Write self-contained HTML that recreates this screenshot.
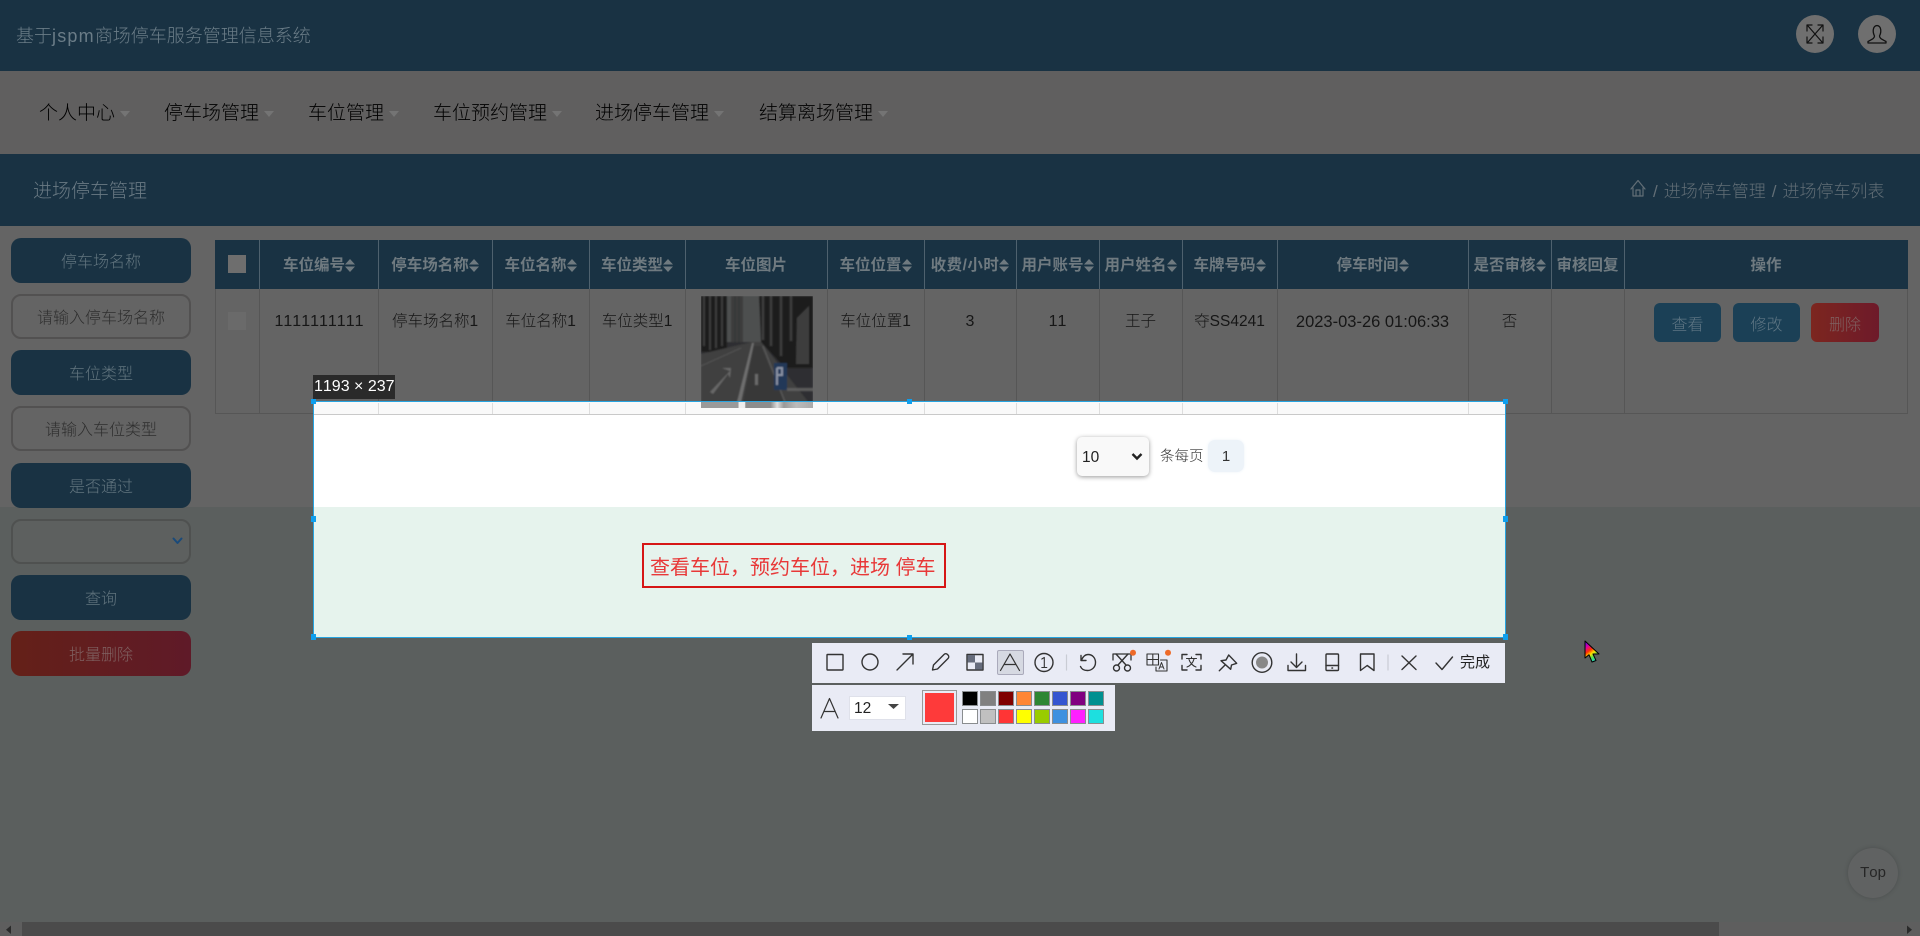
<!DOCTYPE html>
<html lang="zh">
<head>
<meta charset="utf-8">
<title>进场停车管理</title>
<style>
html,body{margin:0;padding:0;width:1920px;height:936px;overflow:hidden;background:#646464}
body{font-family:"Liberation Sans","Noto Sans CJK SC",sans-serif;position:relative;font-kerning:none}
.a{position:absolute;box-sizing:border-box}
.t{position:absolute;white-space:nowrap;text-align:center;font-weight:300}
.side{position:absolute;left:11px;width:180px;height:45px;line-height:49px;border-radius:10px;background:#193243;color:#62757f;font-size:16px;text-align:center;font-weight:300}
.inp{position:absolute;left:11px;width:180px;height:45px;line-height:45px;border-radius:10px;border:2px solid #525151;background:#646464;color:#2e2e2e;font-size:16px;text-align:center;box-sizing:border-box;font-weight:300}
.nav{position:absolute;top:100px;line-height:28px;font-size:19px;color:#000;font-weight:300;white-space:nowrap}
.tri{position:absolute;top:111px;width:0;height:0;border-left:5px solid transparent;border-right:5px solid transparent;border-top:6px solid #747474}
.vl{position:absolute;width:1px;top:240px;height:49px;background:#4e616e}
.vr{position:absolute;width:1px;top:289px;height:125px;background:#565656}
.vw{position:absolute;width:1px;top:403px;height:11px;background:#ddd}
.th{position:absolute;top:240px;height:49px;line-height:51px;font-size:15.5px;font-weight:700;color:#6f7a80;text-align:center;white-space:nowrap}
.td{position:absolute;top:308px;line-height:28px;font-size:15.5px;color:#161616;text-align:center;white-space:nowrap;font-weight:300}
.th svg{vertical-align:-2px;margin-left:0}
.rb{position:absolute;top:303px;height:39px;line-height:46px;border-radius:6px;background:#1b4056;color:#5f7684;font-size:16px;text-align:center;font-weight:300}
.h{position:absolute;width:5px;height:5px;background:#0f9fee}
.sw{position:absolute;width:16px;height:15px;box-sizing:border-box;border:1px solid #8a8d8f}
</style>
</head>
<body>
<!-- dimmed page -->
<div class="a" style="left:0;top:0;width:1920px;height:71px;background:#193243"></div>
<div class="a" style="left:0;top:71px;width:1920px;height:83px;background:#605f5f"></div>
<div class="a" style="left:0;top:154px;width:1920px;height:72px;background:#193243"></div>
<div class="a" style="left:0;top:507px;width:1920px;height:429px;background:#5b5f5e"></div>

<div class="t" style="left:16px;top:22px;line-height:28px;font-size:18px;color:#6a7c87">基于<span style="letter-spacing:1.2px">jspm</span>商场停车服务管理信息系统</div>
<div class="a" style="left:1796px;top:15px;width:38px;height:38px;border-radius:50%;background:#6f6f6f"></div>
<div class="a" style="left:1858px;top:15px;width:38px;height:38px;border-radius:50%;background:#6f6f6f"></div>

<div class="nav" style="left:39px">个人中心</div><div class="tri" style="left:120px"></div>
<div class="nav" style="left:164px">停车场管理</div><div class="tri" style="left:264px"></div>
<div class="nav" style="left:308px">车位管理</div><div class="tri" style="left:389px"></div>
<div class="nav" style="left:433px">车位预约管理</div><div class="tri" style="left:552px"></div>
<div class="nav" style="left:595px">进场停车管理</div><div class="tri" style="left:714px"></div>
<div class="nav" style="left:759px">结算离场管理</div><div class="tri" style="left:878px"></div>

<div class="t" style="left:33px;top:178px;line-height:28px;font-size:19px;color:#6a7a84">进场停车管理</div>
<div class="t" style="left:1653px;top:179px;line-height:26px;font-size:17px;color:#626e76;word-spacing:1.3px">/ 进场停车管理 / 进场停车列表</div>

<!-- sidebar -->
<div class="side" style="top:238px">停车场名称</div>
<div class="inp" style="top:294px">请输入停车场名称</div>
<div class="side" style="top:350px">车位类型</div>
<div class="inp" style="top:406px">请输入车位类型</div>
<div class="side" style="top:463px">是否通过</div>
<div class="inp" style="top:519px;background:#5d605f;border-color:#4f5150"></div>
<div class="side" style="top:575px">查询</div>
<div class="side" style="top:631px;background:linear-gradient(90deg,#642018,#5f1a28);color:#806262">批量删除</div>

<!-- table head -->
<div class="a" style="left:215px;top:240px;width:1693px;height:49px;background:#193243"></div>
<div class="a" style="left:215px;top:289px;width:1693px;height:125px;border:1px solid #565656;border-top:0"></div>
<div class="a" style="left:228px;top:255px;width:18px;height:18px;background:#6e6e6e"></div>
<div class="a" style="left:228px;top:312px;width:18px;height:18px;background:#6a6a6a"></div>

<div class="vl" style="left:259px"></div><div class="vl" style="left:378px"></div><div class="vl" style="left:492px"></div><div class="vl" style="left:589px"></div><div class="vl" style="left:685px"></div><div class="vl" style="left:827px"></div><div class="vl" style="left:924px"></div><div class="vl" style="left:1016px"></div><div class="vl" style="left:1099px"></div><div class="vl" style="left:1182px"></div><div class="vl" style="left:1277px"></div><div class="vl" style="left:1468px"></div><div class="vl" style="left:1551px"></div><div class="vl" style="left:1624px"></div>
<div class="vr" style="left:259px"></div><div class="vr" style="left:378px"></div><div class="vr" style="left:492px"></div><div class="vr" style="left:589px"></div><div class="vr" style="left:685px"></div><div class="vr" style="left:827px"></div><div class="vr" style="left:924px"></div><div class="vr" style="left:1016px"></div><div class="vr" style="left:1099px"></div><div class="vr" style="left:1182px"></div><div class="vr" style="left:1277px"></div><div class="vr" style="left:1468px"></div><div class="vr" style="left:1551px"></div><div class="vr" style="left:1624px"></div>

<div class="th" style="left:259px;width:120px">车位编号<svg width="10" height="13" viewBox="0 0 10 13"><path d="M5 0L10 5.5H0ZM5 13L0 7.5H10Z" fill="#6f7a80"/></svg></div>
<div class="th" style="left:378px;width:114px">停车场名称<svg width="10" height="13" viewBox="0 0 10 13"><path d="M5 0L10 5.5H0ZM5 13L0 7.5H10Z" fill="#6f7a80"/></svg></div>
<div class="th" style="left:492px;width:97px">车位名称<svg width="10" height="13" viewBox="0 0 10 13"><path d="M5 0L10 5.5H0ZM5 13L0 7.5H10Z" fill="#6f7a80"/></svg></div>
<div class="th" style="left:589px;width:96px">车位类型<svg width="10" height="13" viewBox="0 0 10 13"><path d="M5 0L10 5.5H0ZM5 13L0 7.5H10Z" fill="#6f7a80"/></svg></div>
<div class="th" style="left:685px;width:142px">车位图片</div>
<div class="th" style="left:827px;width:97px">车位位置<svg width="10" height="13" viewBox="0 0 10 13"><path d="M5 0L10 5.5H0ZM5 13L0 7.5H10Z" fill="#6f7a80"/></svg></div>
<div class="th" style="left:924px;width:92px"><span style="letter-spacing:.5px">收费/小时</span><svg width="10" height="13" viewBox="0 0 10 13"><path d="M5 0L10 5.5H0ZM5 13L0 7.5H10Z" fill="#6f7a80"/></svg></div>
<div class="th" style="left:1016px;width:83px">用户账号<svg width="10" height="13" viewBox="0 0 10 13"><path d="M5 0L10 5.5H0ZM5 13L0 7.5H10Z" fill="#6f7a80"/></svg></div>
<div class="th" style="left:1099px;width:83px">用户姓名<svg width="10" height="13" viewBox="0 0 10 13"><path d="M5 0L10 5.5H0ZM5 13L0 7.5H10Z" fill="#6f7a80"/></svg></div>
<div class="th" style="left:1182px;width:95px">车牌号码<svg width="10" height="13" viewBox="0 0 10 13"><path d="M5 0L10 5.5H0ZM5 13L0 7.5H10Z" fill="#6f7a80"/></svg></div>
<div class="th" style="left:1277px;width:191px">停车时间<svg width="10" height="13" viewBox="0 0 10 13"><path d="M5 0L10 5.5H0ZM5 13L0 7.5H10Z" fill="#6f7a80"/></svg></div>
<div class="th" style="left:1468px;width:83px">是否审核<svg width="10" height="13" viewBox="0 0 10 13"><path d="M5 0L10 5.5H0ZM5 13L0 7.5H10Z" fill="#6f7a80"/></svg></div>
<div class="th" style="left:1551px;width:73px">审核回复</div>
<div class="th" style="left:1624px;width:284px">操作</div>

<div class="td" style="left:259px;width:120px;font-size:16px">1111111111</div>
<div class="td" style="left:378px;width:114px">停车场名称1</div>
<div class="td" style="left:492px;width:97px">车位名称1</div>
<div class="td" style="left:589px;width:96px">车位类型1</div>
<div class="td" style="left:827px;width:97px">车位位置1</div>
<div class="td" style="left:924px;width:92px;font-size:16px">3</div>
<div class="td" style="left:1016px;width:83px;font-size:16px">11</div>
<div class="td" style="left:1099px;width:83px">王子</div>
<div class="td" style="left:1182px;width:95px">夺SS4241</div>
<div class="td" style="left:1277px;width:191px;font-size:16.5px">2023-03-26 01:06:33</div>
<div class="td" style="left:1468px;width:83px">否</div>

<div class="rb" style="left:1654px;width:67px">查看</div>
<div class="rb" style="left:1733px;width:67px">修改</div>
<div class="rb" style="left:1811px;width:68px;background:linear-gradient(90deg,#7c261f,#6e1a2a);color:#806262">删除</div>

<!-- parking photo -->
<svg class="a" style="left:701px;top:296px" width="112" height="106" viewBox="0 0 112 106">
<defs><filter id="b" x="-5%" y="-5%" width="110%" height="110%"><feGaussianBlur stdDeviation="0.9"/></filter></defs>
<g filter="url(#b)">
<rect width="112" height="106" fill="#2e2f30"/>
<rect x="26" y="0" width="34" height="46" fill="#4e4f50"/>
<path d="M0 0H26V56H0Z" fill="#1f1f1f"/>
<path d="M3 0V50M9 0V54M15 0V52M21 0V50" stroke="#3e3e3e" stroke-width="1.800"/>
<path d="M30 0H42V46H30Z" fill="#3c3d3e"/>
<path d="M34 0V46M38 0V46" stroke="#2f3030" stroke-width="1"/>
<path d="M58 0H112V72H84L60 46Z" fill="#1f1f1f"/>
<path d="M62 0V44M70 0V50M80 0V60M90 0V45" stroke="#3c3c3c" stroke-width="2.400"/>
<path d="M96 22L108 10V68H95Z" fill="#3c3c3c"/>
<path d="M0 58L51 46L60 46L112 112H0Z" fill="#414141"/>
<path d="M60 50L84 106H42L53 50Z" fill="#383838"/>
<path d="M51 47L36 106H40L53 47Z" fill="#6e6e6e"/>
<path d="M62 50L84 106" stroke="#575757" stroke-width="1.500"/>
<path d="M0 70L40 52" stroke="#525252" stroke-width="1"/>
<path d="M9 96L29 75L21 72L30 72L29 82L27 78L12 98Z" fill="#686868"/>
<rect x="54" y="78" width="3" height="11" fill="#6a6a6a"/>
<rect x="73" y="67" width="13" height="27" fill="#243858"/>
<path d="M76 72V89M76 72H81V79H76" stroke="#8a93a4" stroke-width="2" fill="none"/>
<rect x="86" y="92" width="26" height="3" fill="#5c5c5c"/>
</g>
</svg>

<!-- capture selection -->
<div class="a" style="left:313px;top:401px;width:1193px;height:237px;background:#fff;border:1px solid #27a4e0;overflow:hidden"></div>
<div class="a" style="left:314px;top:402px;width:1191px;height:12px;background:#f9f9f9"></div>
<div class="a" style="left:314px;top:414px;width:1191px;height:1px;background:#c9c9c9"></div>
<div class="a" style="left:314px;top:507px;width:1191px;height:130px;background:#e6f3ed"></div>
<div class="vw" style="left:378px"></div><div class="vw" style="left:492px"></div><div class="vw" style="left:589px"></div><div class="vw" style="left:685px"></div><div class="vw" style="left:827px"></div><div class="vw" style="left:924px"></div><div class="vw" style="left:1016px"></div><div class="vw" style="left:1099px"></div><div class="vw" style="left:1182px"></div><div class="vw" style="left:1277px"></div><div class="vw" style="left:1468px"></div>
<!-- photo strip inside selection -->
<div class="a" style="left:701px;top:402px;width:112px;height:6px;background:linear-gradient(90deg,#9a9a9a 0,#9a9a9a 33%,#eee 34%,#eee 39%,#8d8d8d 40%,#8d8d8d 62%,#ddd 68%,#999 74%,#bbb 85%,#aaa 100%)"></div>

<div class="a" style="left:1077px;top:437px;width:72px;height:39px;background:#f9f9f9;border-radius:5px;box-shadow:0 1px 5px rgba(0,0,0,.4)"></div>
<div class="t" style="left:1082px;top:445px;line-height:26px;font-size:15.5px;color:#222;font-weight:400">10</div>
<svg class="a" style="left:1131px;top:452px" width="12" height="10" viewBox="0 0 12 10"><path d="M1.500 2L6 6.500L10.500 2" fill="none" stroke="#222" stroke-width="2.400"/></svg>
<div class="t" style="left:1160px;top:444px;line-height:26px;font-size:14.500px;color:#333">条每页</div>
<div class="a" style="left:1208px;top:440px;width:36px;height:32px;background:#edf3f9;border-radius:7px;box-shadow:0 0 3px #edf3f9;line-height:33px;text-align:center;font-size:15px;color:#333">1</div>

<div class="a" style="left:642px;top:543px;width:304px;height:45px;border:2px solid #d61616"></div>
<div class="t" style="left:650px;top:553px;line-height:30px;font-size:20px;color:#e83838;font-weight:400">查看车位，预约车位，进场 停车</div>

<div class="a" style="left:313px;top:375px;width:82px;height:24px;background:#2a2a2a"></div>
<div class="t" style="left:314px;top:375px;line-height:24px;font-size:16px;color:#fff;font-weight:400">1193 × 237</div>

<div class="h" style="left:311px;top:399px"></div><div class="h" style="left:907px;top:399px"></div><div class="h" style="left:1503px;top:399px"></div>
<div class="h" style="left:311px;top:516px;height:6px"></div><div class="h" style="left:1503px;top:516px;height:6px"></div>
<div class="h" style="left:311px;top:634px;height:6px"></div><div class="h" style="left:907px;top:635px"></div><div class="h" style="left:1503px;top:634px;height:6px"></div>

<!-- toolbar -->
<div class="a" style="left:812px;top:643px;width:693px;height:40px;background:#e9ebf5"></div>
<div class="a" style="left:812px;top:685px;width:303px;height:46px;background:#e9ebf5"></div>
<div class="a" style="left:997px;top:650px;width:27px;height:25px;background:#d6d9e2;border:1px solid #aab;border-radius:2px"></div>

<div class="a" style="left:849px;top:696px;width:57px;height:24px;background:#fff;border:1px solid #dfe1ea"></div>
<div class="t" style="left:854px;top:696px;line-height:25px;font-size:15.500px;color:#222;font-weight:400">12</div>
<div class="a" style="left:922px;top:690px;width:35px;height:35px;background:#fe3a3a;border:1px solid #999;outline:2px solid #e9ebf5;outline-offset:-3px"></div>

<div class="sw" style="left:962px;top:691px;background:#000"></div><div class="sw" style="left:980px;top:691px;background:#808080"></div><div class="sw" style="left:998px;top:691px;background:#800000"></div><div class="sw" style="left:1016px;top:691px;background:#ff8635"></div><div class="sw" style="left:1034px;top:691px;background:#2d8633"></div><div class="sw" style="left:1052px;top:691px;background:#3555d0"></div><div class="sw" style="left:1070px;top:691px;background:#800080"></div><div class="sw" style="left:1088px;top:691px;background:#009090"></div>
<div class="sw" style="left:962px;top:709px;background:#fff"></div><div class="sw" style="left:980px;top:709px;background:#c0c0c0"></div><div class="sw" style="left:998px;top:709px;background:#ff3535"></div><div class="sw" style="left:1016px;top:709px;background:#ffff00"></div><div class="sw" style="left:1034px;top:709px;background:#99cc00"></div><div class="sw" style="left:1052px;top:709px;background:#3d90e0"></div><div class="sw" style="left:1070px;top:709px;background:#ff20ff"></div><div class="sw" style="left:1088px;top:709px;background:#1ddfdf"></div>

<div class="t" style="left:1460px;top:651px;line-height:24px;font-size:15px;color:#222;font-weight:400">完成</div>

<!-- scrollbar -->
<div class="a" style="left:0;top:922px;width:1920px;height:14px;background:#5e5e5e"></div>
<div class="a" style="left:22px;top:922px;width:1697px;height:14px;background:#4b4b4b"></div>

<!-- back to top -->
<div class="a" style="left:1848px;top:848px;width:50px;height:50px;border-radius:50%;background:#606262;box-shadow:0 0 5px rgba(0,0,0,.18);line-height:50px;text-align:center;font-size:15px;color:#262626">Top</div>

<!-- icons -->
<svg class="a" style="left:0;top:0;pointer-events:none" width="1920" height="936" viewBox="0 0 1920 936" fill="none" stroke-linecap="round" stroke-linejoin="round">
<defs>
<linearGradient id="rb" x1="0.1" y1="0" x2="0.6" y2="1"><stop offset="0" stop-color="#5a00ff"/><stop offset=".25" stop-color="#e000a0"/><stop offset=".45" stop-color="#ff3000"/><stop offset=".62" stop-color="#ffe000"/><stop offset=".8" stop-color="#50e050"/><stop offset="1" stop-color="#20d0d0"/></linearGradient>
</defs>

<!-- fullscreen -->
<g stroke="#111" stroke-width="1.200">
<path d="M1808 26L1822 42M1822 26L1808 42"/>
<path d="M1807 31V25H1812M1823 31V25H1818M1807 37V43H1812M1823 37V43H1818"/>
</g>
<!-- user -->
<g stroke="#111" stroke-width="1.300">
<path d="M1874.500 36C1872.500 32 1872.500 26 1877 25.500C1881.500 26 1881.500 32 1879.500 36C1879.500 38.500 1882.500 39.500 1886 41.500V43H1868V41.500C1871.500 39.500 1874.500 38.500 1874.500 36Z"/>
</g>
<!-- breadcrumb home -->
<g stroke="#626e76" stroke-width="1.200">
<path d="M1631 189L1638 180.500L1645 189"/><path d="M1633 188V196H1643V188"/><path d="M1636 196V190H1640V196"/>
</g>
<!-- side select chevron -->
<path d="M173.500 538.500L177.500 543L181.500 538.500" stroke="#1a4a7a" stroke-width="2"/>

<g stroke="#333" stroke-width="1.400">
<rect x="827" y="654.500" width="16" height="15.500" rx=".5"/>
<circle cx="870" cy="662" r="8"/>
<path d="M897 670L913 654M903 654H913V664"/>
<path d="M932.500 670L933.500 665L944 654.500C945 653.500 946.500 653.500 947.500 654.500L948 655C949 656 949 657.500 948 658.500L937.500 669Z"/>
<rect x="967" y="654.500" width="16" height="15.500"/>
<path d="M1000.500 670.500L1010 654L1019.500 670.500M1004 664.500H1016" stroke-width="1.200"/>
<circle cx="1044" cy="662.500" r="9"/>
<path d="M1041.800 659L1044.300 657.500V667.500M1041.800 667.500H1046.800" stroke-width="1.100"/>
<path d="M1081 655.500V660.500H1086M1081.500 660C1083 656.500 1085 654.500 1088 654.500C1092.500 654.500 1095.500 658 1095.500 662.500C1095.500 667 1092 670.500 1087.500 670.500C1084 670.500 1081.500 669 1080.500 666.500"/>
<path d="M1113 660V654H1131V660" stroke-width="1.300"/>
<path d="M1116 654L1126 665M1128 654L1118 665"/>
<circle cx="1116.500" cy="668" r="3"/><circle cx="1127.500" cy="668" r="3"/>
<path d="M1147 654H1158.500V665H1147ZM1147 659.500H1158.500M1152.800 654V665" stroke-width="1.100"/>
<path d="M1160.500 660H1167V671H1156V667" stroke-width="1.100"/>
<path d="M1159 669L1161.500 662.500L1164 669M1160 667H1163" stroke-width="1"/>
<path d="M1182 659V654.500H1187M1196 654.500H1201V659M1182 665.500V670H1187M1196 670H1201V665.500"/>
<path d="M1186.500 658.500H1196.500M1191.500 657V658.500M1194 659C1193 663 1190 666 1187 667M1189 659.500C1190 663 1193 666 1196 667" stroke-width="1.100"/>
<path d="M1221 660.700L1226 660L1228.700 655L1236.700 663.300L1231.500 665L1230.700 669.300ZM1225.300 664.700L1219.300 670.700"/>
<circle cx="1262" cy="662.500" r="9.800"/>
<circle cx="1262" cy="662.500" r="6" fill="#888" stroke="none"/>
<path d="M1296.500 654V667M1291 662L1296.500 667.500L1302 662M1288 665.500V670.500H1305.500V665.500"/>
<rect x="1326" y="654" width="12.500" height="16.500" rx="1"/>
<path d="M1326 665.500H1338.500"/>
<path d="M1332 668H1332.500" stroke-width="1.600"/>
<path d="M1360.500 654H1374V670.500L1367.200 665.500L1360.500 670.500Z"/>
<path d="M1402 656L1416 669.500M1416 656L1402 669.500"/>
<path d="M1436 663L1442 669.500L1452.500 657"/>
<path d="M821 718L829.500 698.500L838 718M824 711.500H835" stroke-width="1.200"/>
</g>
<rect x="967.500" y="655" width="7.500" height="7.500" fill="#666c7c"/><rect x="975" y="662.500" width="7.500" height="7" fill="#666c7c"/>
<path d="M1066.500 655V670M1388 655V670" stroke="#c9ccd4" stroke-width="1.200"/>
<circle cx="1133" cy="652.700" r="3" fill="#ee6a28"/>
<circle cx="1168" cy="652.700" r="3" fill="#ee6a28"/>
<path d="M888 704H899L893.500 709Z" fill="#444"/>

<!-- scroll arrows -->
<path d="M1907 925.500V934L1912 929.700Z" fill="#2a2a2a"/>
<path d="M11 925.500V934L6 929.700Z" fill="#2a2a2a"/>

<!-- cursor -->
<path d="M1585 641V658L1589 654.700L1592 662L1596 660.500L1593 654H1599Z" fill="url(#rb)" stroke="#000" stroke-width="1"/>
</svg>
</body>
</html>
